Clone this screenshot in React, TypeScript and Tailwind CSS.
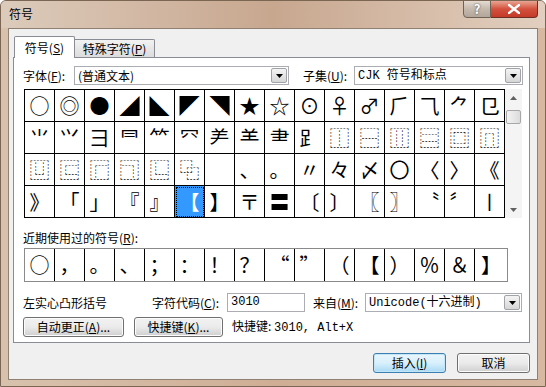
import React from 'react'

const cjk = "font-['Noto_Sans_CJK_SC','Noto_Sans',sans-serif]"
const mono = "font-['Liberation_Mono','Noto_Sans_CJK_SC',monospace]"

const grid: string[][] = [
  ['○', '◎', '●', '◢', '◣', '◤', '◥', '★', '☆', '⊙', '♀', '♂', '⺁', '⺄', '⺈', '⺋'],
  ['⺌', '⺍', '⺕', '⺜', '⺮', '⺳', '⺶', '⺷', '⺻', '⻊', '⿰', '⿱', '⿲', '⿳', '⿴', '⿵'],
  ['⿶', '⿷', '⿸', '⿹', '⿺', '⿻', '\u3000', '、', '。', '〃', '々', '〆', '〇', '〈', '〉', '《'],
  ['》', '「', '」', '『', '』', '【', '】', '〒', '〓', '〔', '〕', '〖', '〗', '〝', '〞', '〡'],
]

const recent = ['○', '，', '。', '、', '；', '：', '！', '？', '“', '”', '（', '【', '）', '％', '＆', '】']

function Arrow({ up }: { up?: boolean }) {
  return (
    <svg width="7" height="4" viewBox="0 0 7 4">
      <path d={up ? 'M0 4 L3.5 0 L7 4 Z' : 'M0 0 L7 0 L3.5 4 Z'} fill="#000" />
    </svg>
  )
}

function Combo({ w, children, textClass = '' }: { w: string; children: React.ReactNode; textClass?: string }) {
  return (
    <div className={`${w} h-[19px] border border-[#abadb3] bg-white flex items-center`}>
      <span className={`flex-1 pl-[3px] text-[12px] leading-none whitespace-nowrap ${textClass}`}>{children}</span>
      <span className="w-[16px] h-[15px] mr-px border border-[#a0a3a8] rounded-[2px] bg-gradient-to-b from-[#f4f4f4] to-[#d6d6d6] flex items-center justify-center">
        <Arrow />
      </span>
    </div>
  )
}

function Btn({ w, children, primary }: { w: string; children: React.ReactNode; primary?: boolean }) {
  return (
    <button
      className={`${w} h-[20px] rounded-[3px] border text-[12px] leading-none flex items-center justify-center ${
        primary
          ? 'border-[#3c7fb1] bg-gradient-to-b from-[#eaf6fd] via-[#d9f0fc] to-[#a7d9f5] shadow-[inset_0_0_0_1px_#c4e5f6]'
          : 'border-[#707070] bg-gradient-to-b from-[#f2f2f2] via-[#ebebeb] to-[#cfcfcf] shadow-[inset_0_0_0_1px_#fcfcfc]'
      }`}
    >
      {children}
    </button>
  )
}

export default function App() {
  return (
    <div className={`w-[546px] h-[387px] overflow-hidden ${cjk} text-black bg-gradient-to-r from-[#d8c2ad] via-[#cfae95] to-[#d7b8a0] rounded-t-[6px] border border-[#7b6553] flex flex-col`}>
      {/* title bar */}
      <div className="h-[27px] flex justify-between pl-[8px] pr-[7px] bg-gradient-to-r from-[#dccbbb] via-[#c8a78f] to-[#e2cfbf]">
        <span className="pt-[6px] text-[12px] leading-[14px]">符号</span>
        <div className="flex h-[18px] -mt-px">
          <div className="w-[28px] h-[18px] rounded-bl-[4px] border border-[#6f6257] bg-gradient-to-b from-[#e6dcd3] via-[#c5b8ad] to-[#b3a699] flex items-center justify-center text-white text-[13px] font-bold [text-shadow:0_0_2px_#333]">
            ?
          </div>
          <div className="w-[47px] h-[18px] rounded-br-[4px] border border-l-0 border-[#6b2f26] bg-gradient-to-b from-[#e8a493] via-[#d2503d] to-[#c43a27] flex items-center justify-center">
            <svg width="12" height="10" viewBox="0 0 12 10">
              <path d="M1 1 L11 9 M11 1 L1 9" stroke="#fff" strokeWidth="2.4" strokeLinecap="square" />
            </svg>
          </div>
        </div>
      </div>

      {/* client area */}
      <div className="mx-[7px] h-[352px] bg-[#f0f0f0] border border-[#8e8174] flex flex-col">
        <div className="pt-[7px] pl-[4px] pr-[7px]">
          {/* tabs */}
          <div className="flex items-end h-[21px] pl-px">
            <div className="w-[61px] h-[22px] -mb-px relative z-10 bg-white border border-b-0 border-[#898c95] rounded-t-[2px] flex items-center justify-center text-[12px] leading-none">
              符号(<u>S</u>)
            </div>
            <div className="w-[80px] h-[18px] bg-gradient-to-b from-[#f2f2f2] to-[#dcdcdc] border border-l-0 border-b-0 border-[#898c95] rounded-tr-[2px] flex items-center justify-center text-[12px] leading-none">
              特殊字符(<u>P</u>)
            </div>
          </div>

          {/* panel */}
          <div className="h-[286px] bg-white border border-[#898c95] flex flex-col">
            {/* font / subset row */}
            <div className="mt-[8px] pl-[9px] flex items-center">
              <span className="w-[51px] text-[12px] leading-none whitespace-nowrap">字体(<u>F</u>):</span>
              <Combo w="w-[215px]">(普通文本)</Combo>
              <span className="ml-[14px] w-[51px] text-[12px] leading-none whitespace-nowrap">子集(<u>U</u>):</span>
              <Combo w="w-[169px]" textClass={mono}>CJK 符号和标点</Combo>
            </div>

            {/* symbol grid */}
            <div className="mt-[4px] pl-[10px] flex">
              <div className="border-l border-t border-black">
                {grid.map((row, r) => (
                  <div key={r} className="flex">
                    {row.map((ch, c) => {
                      const sel = r === 3 && c === 5
                      return (
                        <div
                          key={c}
                          className={`w-[30px] h-[32px] border-r border-b border-black flex items-center justify-center text-[20px] leading-none ${
                            sel ? 'bg-[#3399ff] text-white outline outline-1 outline-dotted outline-black -outline-offset-2' : ''
                          }`}
                        >
                          {ch}
                        </div>
                      )
                    })}
                  </div>
                ))}
              </div>
              <div className="w-[17px] h-[129px] bg-[#f4f4f4] flex flex-col items-center">
                <div className="h-[17px] flex items-center justify-center opacity-60">
                  <Arrow up />
                </div>
                <div className="mt-[4px] w-[15px] h-[14px] border border-[#a8a8a8] rounded-[2px] bg-gradient-to-r from-[#f3f3f3] to-[#dcdcdc]" />
                <div className="flex-1" />
                <div className="h-[17px] flex items-center justify-center opacity-60">
                  <Arrow />
                </div>
              </div>
            </div>

            {/* recent */}
            <div className="mt-[13px] pl-[9px] text-[12px] leading-[14px]">近期使用过的符号(<u>R</u>):</div>
            <div className="mt-[3px] pl-[10px] flex">
              <div className="flex border border-r-0 border-[#8a8a8a]">
                {recent.map((ch, i) => (
                  <div
                    key={i}
                    className={`${i === 15 ? 'w-[33px]' : 'w-[30px]'} h-[32px] border-r ${
                      i === 15 ? 'border-[#8a8a8a]' : 'border-black'
                    } flex items-center justify-center text-[20px] leading-none`}
                  >
                    {ch}
                  </div>
                ))}
              </div>
            </div>

            {/* code row */}
            <div className="mt-[11px] pl-[9px] flex items-center h-[19px]">
              <span className="w-[129px] text-[12px] leading-none whitespace-nowrap">左实心凸形括号</span>
              <span className="w-[75px] text-[12px] leading-none whitespace-nowrap">字符代码(<u>C</u>):</span>
              <div className={`w-[78px] h-[19px] border border-[#abadb3] bg-white pl-[3px] text-[12px] leading-[17px] ${mono}`}>3010</div>
              <span className="ml-[8px] w-[52px] text-[12px] leading-none whitespace-nowrap">来自(<u>M</u>):</span>
              <Combo w="w-[157px]" textClass={mono}>Unicode(十六进制)</Combo>
            </div>

            {/* buttons row */}
            <div className="mt-[5px] pl-[9px] flex items-center">
              <Btn w="w-[101px]">自动更正(<u>A</u>)...</Btn>
              <span className="ml-[10px]">
                <Btn w="w-[89px]">快捷键(<u>K</u>)...</Btn>
              </span>
              <span className="ml-[9px] text-[12px] leading-none whitespace-nowrap">
                快捷键: <span className={mono}>3010, Alt+X</span>
              </span>
            </div>
          </div>

          {/* dialog buttons */}
          <div className="mt-[10px] flex justify-end gap-[11px]">
            <Btn w="w-[73px]" primary>插入(<u>I</u>)</Btn>
            <Btn w="w-[73px]">取消</Btn>
          </div>
        </div>
      </div>
    </div>
  )
}
